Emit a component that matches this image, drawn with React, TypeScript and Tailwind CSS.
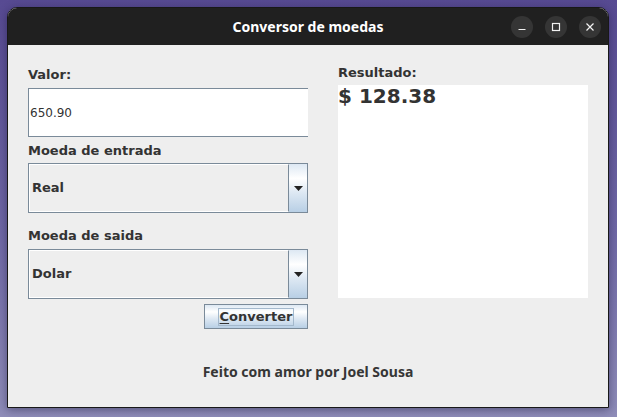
import React from 'react'

const swing = { fontFamily: '"DejaVu Sans", sans-serif' }
const ubuntu = { fontFamily: '"Noto Sans", "Open Sans", sans-serif' }

function ComboBox({ value }: { value: string }) {
  return (
    <div className="flex h-[50px] w-[280px] border border-[#7a8a99] bg-[#eeeeee]">
      <div className="flex flex-1 items-center border border-white border-r-[#7a8a99] pl-[2px] text-[13px] font-bold text-[#333333]">
        {value}
      </div>
      <div className="flex w-[18px] items-center justify-center bg-[linear-gradient(to_bottom,#dde8f3_0%,#ffffff_30%,#dde8f3_60%,#b8cfe5_100%)]">
        <svg width="9" height="5" viewBox="0 0 9 5">
          <path d="M0 0 H9 L4.5 5 Z" fill="#222222" />
        </svg>
      </div>
    </div>
  )
}

function Label({ children }: { children: React.ReactNode }) {
  return <div className="h-[16px] text-[13px] leading-[16px] font-bold text-[#333333]">{children}</div>
}

export default function App() {
  return (
    <div className="h-[417px] w-[617px] overflow-hidden bg-[linear-gradient(to_bottom,#574a92,#6f68a6_55%,#8f8db9)] pl-[7px] pt-[7px]">
      <div
        className="flex h-[401px] w-[602px] flex-col overflow-hidden rounded-t-[10px] border border-[#181818] bg-[#eeeeee] shadow-[0_2px_10px_rgba(20,15,50,0.45)]"
        style={swing}
      >
        {/* title bar */}
        <div className="relative flex h-[37px] shrink-0 items-center justify-center bg-[#202020]">
          <span className="text-[14px] font-bold text-white" style={ubuntu}>
            Conversor de moedas
          </span>
          <div className="absolute right-[7px] top-[8px] flex gap-[12px]">
            <div className="flex h-[22px] w-[22px] items-center justify-center rounded-full bg-[#353535]">
              <svg width="10" height="10" viewBox="0 0 10 10">
                <path d="M1.5 7.5 H8.5" stroke="#f2f2f2" strokeWidth="1.2" />
              </svg>
            </div>
            <div className="flex h-[22px] w-[22px] items-center justify-center rounded-full bg-[#353535]">
              <svg width="10" height="10" viewBox="0 0 10 10">
                <rect x="1.5" y="1.5" width="7" height="7" fill="none" stroke="#f2f2f2" strokeWidth="1.2" />
              </svg>
            </div>
            <div className="flex h-[22px] w-[22px] items-center justify-center rounded-full bg-[#353535]">
              <svg width="10" height="10" viewBox="0 0 10 10">
                <path d="M1.5 1.5 L8.5 8.5 M8.5 1.5 L1.5 8.5" stroke="#f2f2f2" strokeWidth="1.2" />
              </svg>
            </div>
          </div>
        </div>

        {/* content */}
        <div className="flex flex-1 flex-col px-[20px]">
          <div className="flex gap-[30px]">
            <div className="flex w-[280px] flex-col pt-[22px]">
              <Label>Valor:</Label>
              <div className="mt-[5px] flex h-[49px] items-center border border-r-0 border-[#7a8a99] bg-white pl-[1px] text-[12px] text-[#333333]">
                650.90
              </div>
              <div className="mt-[6px]">
                <Label>Moeda de entrada</Label>
              </div>
              <div className="mt-[4px]">
                <ComboBox value="Real" />
              </div>
              <div className="mt-[15px]">
                <Label>Moeda de saida</Label>
              </div>
              <div className="mt-[5px]">
                <ComboBox value="Dolar" />
              </div>
              <div className="mt-[5px] flex justify-end">
                <button className="flex h-[25px] w-[104px] items-center justify-center border border-[#7a8a99] bg-[linear-gradient(to_bottom,#dde8f3_0%,#ffffff_30%,#dde8f3_60%,#b8cfe5_100%)]">
                  <span className="border border-[#a3b8cc] px-[1px] text-[13px] leading-[16px] font-bold text-[#333333]">
                    <span className="underline underline-offset-2">C</span>onverter
                  </span>
                </button>
              </div>
            </div>

            <div className="flex w-[250px] flex-col pt-[20px]">
              <Label>Resultado:</Label>
              <div className="mt-[4px] h-[213px] bg-white">
                <div className="text-[20px] leading-[23px] font-bold text-[#333333]">$ 128.38</div>
              </div>
            </div>
          </div>

          <div className="mt-[33px] text-center text-[14px] leading-[19px] font-bold text-[#363636]" style={ubuntu}>
            Feito com amor por Joel Sousa
          </div>
        </div>
      </div>
    </div>
  )
}
